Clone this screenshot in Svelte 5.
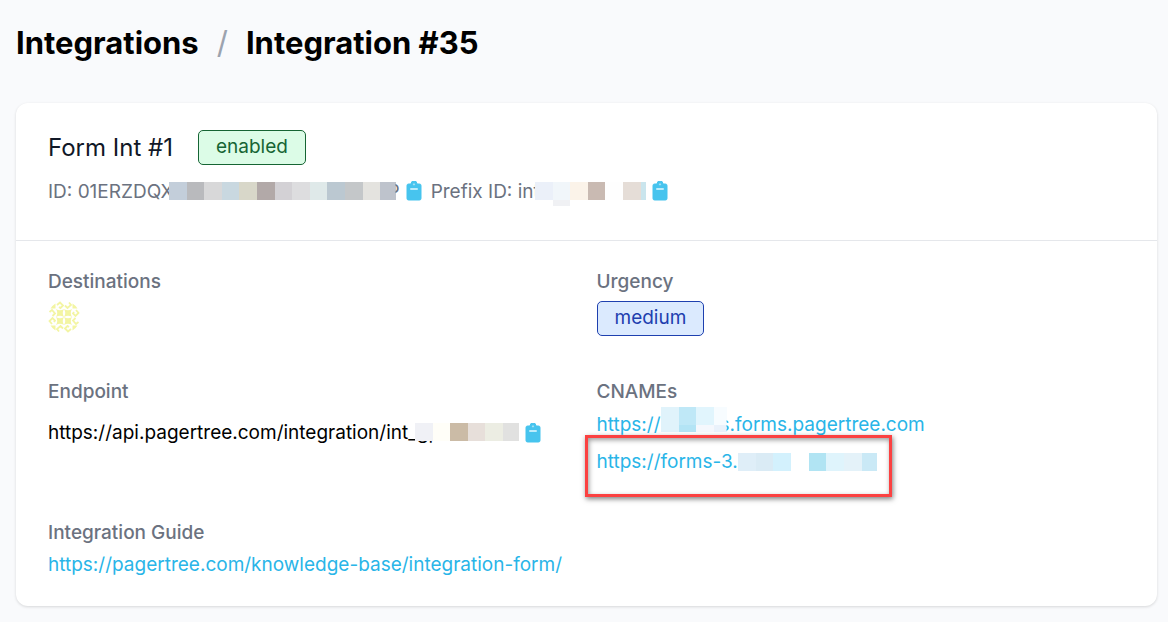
<script>
  const idMosaic = ['#c3ceda', '#b9babd', '#d8d8d9', '#c9d8e0', '#d8d7c9', '#b2a9a8', '#d3d1d5', '#dddddf', '#dfe9e9', '#bbc8d1', '#c4c7c9', '#e4e3df', '#bec3cc'];
  const prefixMosaic = ['#ebf0f9', '#f1f6fa', '#fbf3e9', '#c9bab2', '#fefefe', '#e5ddd7', '#cae5ed'];
  const endpointMosaic = ['#f0f1f6', '#fffef8', '#cbbba6', '#e7dfda', '#ecede3', '#e1e1e0'];
  const quarters = [0, 1, 2, 3];
</script>

{#snippet clipboard(label)}
  <button class="copy" type="button" aria-label={label}>
    <svg width="16" height="20" viewBox="0 0 16 20" aria-hidden="true">
      <path fill="#47c4ee" fill-rule="evenodd" d="M5 3a3 3 0 0 1 6 0h2.5A1.5 1.5 0 0 1 15 4.500V17.500A1.500 1.500 0 0 1 13.500 19h-11A1.500 1.500 0 0 1 1 17.500V4.500A1.500 1.500 0 0 1 2.500 3zM8 2a1.200 1.200 0 1 0 0 2.400A1.200 1.200 0 0 0 8 2z" stroke="#47c4ee" stroke-width="1" />
      <rect x="4" y="7" width="8" height="2" rx="1" fill="#bcecfb" />
    </svg>
  </button>
{/snippet}

{#snippet mosaic(colors, width)}
  <svg class="mosaic" {width} height="18" viewBox="0 0 {width} 18" shape-rendering="crispEdges" aria-hidden="true">
    {#each colors as c, i}
      <rect x={i * 17.6} width="18" height="18" fill={c} />
    {/each}
  </svg>
{/snippet}

<main>
  <h1><span>Integrations</span><span class="slash">/</span><span>Integration #35</span></h1>

  <section class="card">
    <header>
      <div class="title">
        <h2>Form Int #1</h2>
        <span class="badge enabled">enabled</span>
      </div>
      <div class="meta">
        <span class="item"><span>ID: 01ERZDQX</span><span class="cover">{@render mosaic(idMosaic, 227)}</span><span class="tail">P</span></span>
        {@render clipboard('Copy ID')}
        <span class="item prefix"><span>Prefix ID: int</span><span class="cover over">{@render mosaic(prefixMosaic, 111)}<i></i></span></span>
        {@render clipboard('Copy prefix ID')}
      </div>
    </header>

    <dl>
      <div>
        <dt>Destinations</dt>
        <dd class="chip">
          <svg width="32" height="32" viewBox="0 0 32 32" aria-hidden="true">
            {#each quarters as q}
              <g transform="rotate({q * 90} 16 16)">
                <path fill="#f3f5a3" d="M8 8Q12 10.500 16 8Q13.500 12 16 16Q12 13.500 8 16Q10.500 12 8 8zM2.500 7.500A16 16 0 0 1 7.500 2.500V7.500z" />
                <path fill="none" stroke="#f3f5a3" stroke-width="1.800" d="M9 4l3-2.500 3 3-2.500 2.500-1.500-1M17 4.500l2.500 2.500 3.500-3-2-2.500" />
              </g>
            {/each}
          </svg>
        </dd>
      </div>
      <div>
        <dt>Urgency</dt>
        <dd class="chip"><span class="badge medium">medium</span></dd>
      </div>
      <div>
        <dt>Endpoint</dt>
        <dd class="endpoint">
          <span class="item"><span>https://api.pagertree.com/integration/int_</span><span class="under">gp</span><span class="cover">{@render mosaic(endpointMosaic, 104)}</span></span>
          {@render clipboard('Copy endpoint')}
        </dd>
      </div>
      <div>
        <dt>CNAMEs</dt>
        <dd class="cnames">
          <a class="item" href="#forms"><span>https://</span><span class="hidden-name"><svg width="66" height="26" viewBox="0 0 66 26" shape-rendering="crispEdges" aria-hidden="true">
              <path fill="#e0f3fb" d="M0 0h18v25H0z" />
              <path fill="#bfe8f7" d="M18 0h17v18H18z" />
              <path fill="#b3e4f5" d="M18 18h17v7H18z" />
              <path fill="#e1f5fd" d="M35 0h18v18H35z" />
              <path fill="#f7fcff" d="M53 0h13v18H53z" />
              <path fill="#f5f8fd" d="M35 18h18v7H35z" />
              <path fill="#eaf2fb" d="M53 18h13v7H53z" />
            </svg></span><span class="peek">s</span><span>.forms.pagertree.com</span></a>
          <div class="marked">
            <a class="item" href="#forms-3"><span>https://forms-3.</span><span class="domain"><svg width="139" height="18" viewBox="0 0 139 18" shape-rendering="crispEdges" aria-hidden="true">
                <path fill="#dfeef8" d="M0 0h18v18H0z" />
                <path fill="#daebf5" d="M18 0h17v18H18z" />
                <path fill="#d3f1fd" d="M35 0h18v18H35z" />
                <path fill="#b1e4f3" d="M71 0h17v18H71z" />
                <path fill="#dff4fc" d="M88 0h18v18H88z" />
                <path fill="#e4f2f9" d="M106 0h18v18h-18z" />
                <path fill="#cae9f6" d="M124 0h15v18h-15z" />
              </svg></span></a>
          </div>
        </dd>
      </div>
      <div class="wide">
        <dt>Integration Guide</dt>
        <dd class="guide"><a href="#guide">https://pagertree.com/knowledge-base/integration-form/</a></dd>
      </div>
    </dl>
  </section>
</main>

<style>
  :global(body) { margin: 0; background: #f9fafc; }
  main { padding: 22px 11px 16px 16px; font: 400 19px/28px Inter, sans-serif; color: #111827; }
  h1, h2, dl, dd { margin: 0; }
  h1 { display: flex; gap: 18px; font-size: 31px; line-height: 42px; font-weight: 700; color: #000; }
  .slash { color: #9ca3af; font-weight: 400; }
  .card { margin-top: 39px; background: #fff; border-radius: 12px; box-shadow: 0 1px 3px rgb(0 0 0 / 14%); }
  header { padding: 27px 32px 34px; border-bottom: 1px solid #e5e7eb; }
  .title { display: flex; align-items: center; gap: 25px; }
  h2 { font-size: 24px; line-height: 35px; font-weight: 400; }
  .badge { display: inline-block; box-sizing: border-box; height: 35px; padding: 0 17px; border: 1px solid; border-radius: 5px; line-height: 32px; }
  .enabled { background: #dcfce7; color: #166534; }
  .medium { background: #dbeafe; color: #1e40af; }
  .meta { display: flex; align-items: center; margin-top: 13px; color: #6b7280; }
  .item { display: inline-flex; align-items: center; white-space: nowrap; }
  .cover { position: relative; display: flex; margin-left: -5px; }
  .over i { position: absolute; left: 18px; top: 18px; width: 17px; height: 6px; background: #f0f1f4; }
  .mosaic, .copy svg, .chip svg { display: block; }
  .mosaic, .meta .copy svg { margin-bottom: 2px; }
  .tail { margin-left: -8px; clip-path: inset(0 0 0 8px); }
  .prefix { margin-left: 9px; }
  .copy { margin: 0 0 0 6px; padding: 0; border: 0; background: none; }
  dl { display: grid; grid-template-columns: 1fr 1fr; column-gap: 20px; padding: 27px 32px 27px; }
  dt { font-weight: 500; color: #6b7280; }
  .chip { height: 35px; margin: 5px 0 42px; }
  .endpoint { display: flex; align-items: center; margin-top: 13px; color: #000; }
  .under { margin-right: -20px; }
  .cnames { display: flex; flex-direction: column; align-items: flex-start; gap: 9px; margin: 5px 0 43px; }
  a { color: #29b5e8; text-decoration: none; }
  .hidden-name { display: flex; height: 26px; margin-top: -10px; }
  .peek { margin-left: -7px; clip-path: inset(0 0 0 7px); }
  .domain { display: flex; }
  .marked { position: relative; }
  .marked::after { content: ""; position: absolute; inset: -13px -15px -21px -12px; border: 3px solid #fb4141; box-shadow: 1px 2px 5px rgb(0 0 0 / 50%), inset 1px 2px 5px rgb(0 0 0 / 40%); pointer-events: none; }
  .wide { grid-column: 1 / -1; }
  .guide { margin-top: 4px; }
</style>
